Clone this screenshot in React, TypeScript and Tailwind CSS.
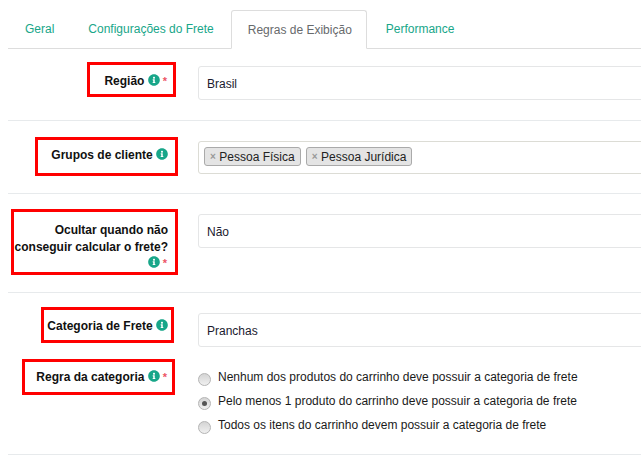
import { FaInfoCircle } from 'react-icons/fa';

const FONT = 'font-["Liberation_Sans",Arial,sans-serif]';

function Info() {
  return <FaInfoCircle className="inline-block h-3 w-3 text-[#18a689] align-[-1px]" />;
}

function Req() {
  return <span className="ml-[3px] text-[11px] text-[#ed5565]">*</span>;
}

function TextInput({ value, className }: { value: string; className: string }) {
  return (
    <div className={`flex w-[500px] items-center rounded-[3px] border border-[#e5e6e7] pl-2 pt-px text-[12px] text-[#1a1a2e] ${className}`}>
      {value}
    </div>
  );
}

function Tag({ label }: { label: string }) {
  return (
    <span className="flex h-[19px] items-center rounded-[3px] border border-[#aaaaaa] bg-[#e4e4e4] pl-[5px] pr-[5px] text-[12px] text-[#222222]">
      <span className="mr-[3.5px] text-[10px] font-bold leading-none text-[#999999]">×</span>
      {label}
    </span>
  );
}

function Radio({ label, checked }: { label: string; checked?: boolean }) {
  return (
    <div className="flex h-6 items-start">
      <span className="mt-[3px] flex h-[13px] w-[13px] items-center justify-center rounded-full border border-[#b4b4b4] bg-linear-to-b from-[#d4d4d4] to-[#f0f0f0]">
        {checked && <span className="h-[5px] w-[5px] rounded-full bg-[#555555]" />}
      </span>
      <span className="ml-[7px] text-[12px] leading-[14px] text-[#1a1a1a]">{label}</span>
    </div>
  );
}

export default function App() {
  return (
    <div className={`h-[455px] w-[641px] overflow-hidden bg-white ${FONT}`}>
      {/* Tabs */}
      <nav className="ml-2 flex h-[49px] items-end border-b border-[#dddddd] pt-[10px] text-[12px] text-[#18a689]">
        <a className="flex h-[38px] items-center pl-[17px] pr-[34px]">Geral</a>
        <a className="flex h-[38px] items-center pr-[17px]">Configurações do Frete</a>
        <a className="-mb-px flex h-[39px] w-[136px] shrink-0 items-center rounded-t-[3px] border border-[#dddddd] border-b-white bg-white pl-[16px] text-[#676a6c]">
          Regras de Exibição
        </a>
        <a className="flex h-[38px] items-center pl-[19px]">Performance</a>
      </nav>

      {/* Região */}
      <section className="ml-2 flex h-[72px] items-start border-b border-[#e7eaec]">
        <div className="flex w-[190px] shrink-0 justify-end pr-[22px] pt-[13px]">
          <div className="flex h-[35px] w-[89px] items-start justify-end border-[3px] border-[#ff0000] pr-[6px] pt-[8px] text-[12px] font-bold leading-[17px] text-[#111111]">
            <span className="whitespace-nowrap">Região <Info /><Req /></span>
          </div>
        </div>
        <div className="pt-[17px]">
          <TextInput value="Brasil" className="h-[34px]" />
        </div>
      </section>

      {/* Grupos */}
      <section className="ml-2 flex h-[73px] items-start border-b border-[#e7eaec]">
        <div className="flex w-[190px] shrink-0 justify-end pr-[20px] pt-[16px]">
          <div className="flex h-[39px] w-[143px] items-start justify-end border-[3px] border-[#ff0000] pr-[7px] pt-[7px] text-[12px] font-bold leading-[17px] text-[#111111]">
            <span className="whitespace-nowrap">Grupos de cliente <Info /></span>
          </div>
        </div>
        <div className="pt-[20px]">
          <div className="flex h-[33px] w-[500px] items-start gap-[5px] rounded-[3px] border border-[#dcdcd5] pl-[5px] pt-[5px]">
            <Tag label="Pessoa Física" />
            <Tag label="Pessoa Jurídica" />
          </div>
        </div>
      </section>

      {/* Ocultar */}
      <section className="ml-2 flex h-[99px] items-start border-b border-[#e7eaec]">
        <div className="flex w-[190px] shrink-0 justify-end pr-[20px] pt-[15px]">
          <div className="h-[66px] w-[167px] border-[3px] border-[#ff0000] pr-[7px] pt-[10px] text-right text-[12px] font-bold leading-[17px] text-[#111111]">
            <span className="whitespace-nowrap">Ocultar quando não</span>
            <br />
            <span className="whitespace-nowrap">conseguir calcular o frete?</span>
            <div className="-mt-px pr-px">
              <Info /><Req />
            </div>
          </div>
        </div>
        <div className="pt-[20px]">
          <TextInput value="Não" className="h-[34px]" />
        </div>
      </section>

      {/* Categoria + regra */}
      <section className="ml-2 h-[162px] border-b border-[#e7eaec]">
        <div className="flex items-start">
          <div className="flex w-[190px] shrink-0 justify-end pr-[24px] pt-[14px]">
            <div className="flex h-[36px] w-[133px] items-start justify-end border-[3px] border-[#ff0000] pr-[3px] pt-[8px] text-[12px] font-bold leading-[17px] text-[#111111]">
              <span className="whitespace-nowrap">Categoria de Frete <Info /></span>
            </div>
          </div>
          <div className="pt-[20px]">
            <TextInput value="Pranchas" className="h-[34px]" />
          </div>
        </div>
        <div className="flex items-start">
          <div className="flex w-[190px] shrink-0 justify-end pr-[23px] pt-[12px]">
            <div className="flex h-[36px] w-[153px] items-start justify-end border-[3px] border-[#ff0000] pr-[5px] pt-[7px] text-[12px] font-bold leading-[17px] text-[#111111]">
              <span className="whitespace-nowrap">Regra da categoria <Info /><Req /></span>
            </div>
          </div>
          <div className="pt-[23px]">
            <Radio label="Nenhum dos produtos do carrinho deve possuir a categoria de frete" />
            <Radio label="Pelo menos 1 produto do carrinho deve possuir a categoria de frete" checked />
            <Radio label="Todos os itens do carrinho devem possuir a categoria de frete" />
          </div>
        </div>
      </section>
    </div>
  );
}
